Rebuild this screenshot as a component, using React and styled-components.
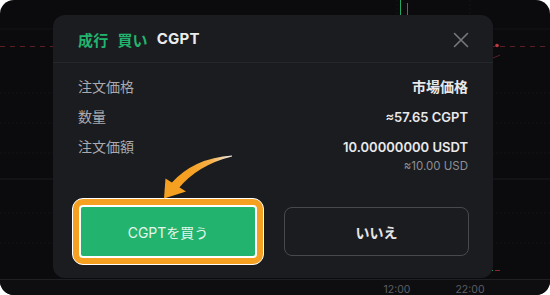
import React from "react";
import styled, { createGlobalStyle } from "styled-components";

const GlobalStyle = createGlobalStyle`
  html, body { margin: 0; padding: 0; background: #ffffff; }
  * { box-sizing: border-box; }
`;

const FONT = `Inter, "Noto Sans CJK JP", "Noto Sans", sans-serif`;

const Frame = styled.div`
  position: relative;
  width: 550px;
  height: 295px;
  border-radius: 14px;
  background: #0b0b0e;
  overflow: hidden;
  display: grid;
  font-family: ${FONT};
`;

const ChartLayer = styled.svg`
  grid-area: 1 / 1;
  width: 550px;
  height: 295px;
  display: block;
`;

const ModalSlot = styled.div`
  grid-area: 1 / 1;
  padding: 15px 0 0 53px;
  align-self: start;
`;

const Modal = styled.div`
  width: 440px;
  height: 263px;
  background: #1b1c20;
  border-radius: 12px;
  display: flex;
  flex-direction: column;
`;

const Header = styled.div`
  height: 48px;
  display: flex;
  align-items: center;
  justify-content: space-between;
  padding: 2px 24px 0 25px;
  border-bottom: 1px solid #26272b;
`;

const Title = styled.div`
  font-size: 15px;
  font-weight: 700;
  color: #ececee;
  display: flex;
  gap: 9px;
  letter-spacing: 0.2px;
`;

const Accent = styled.span`
  color: ${(p) => p.$color || "#22b46e"};
`;

const CloseButton = styled.button`
  border: 0;
  background: transparent;
  padding: 0;
  width: 16px;
  height: 16px;
  display: flex;
  align-items: center;
  justify-content: center;
  cursor: pointer;
`;

const Body = styled.div`
  padding: 13px 25px 0;
  display: flex;
  flex-direction: column;
  gap: 8px;
`;

const Row = styled.div`
  display: flex;
  justify-content: space-between;
  align-items: flex-start;
`;

const Label = styled.div`
  font-size: 14px;
  line-height: 22px;
  color: #a9aaaf;
`;

const ValueCol = styled.div`
  display: flex;
  flex-direction: column;
  align-items: flex-end;
`;

const Value = styled.div`
  font-size: ${(p) => (p.$latin ? "13px" : "14px")};
  line-height: 22px;
  font-weight: 600;
  color: #e9e9eb;
`;

const SubValue = styled.div`
  font-size: 11.5px;
  line-height: 16px;
  color: #8e8f94;
`;

const Footer = styled.div`
  margin-top: 24px;
  padding: 0 24px 0 19px;
  display: flex;
  align-items: center;
  gap: 20px;
`;

const Highlight = styled.div`
  width: 192px;
  height: 67px;
  border: 1px solid #ffffff;
  border-radius: 11px;
  background: #f5a021;
  padding: 6px;
`;

const BuyButton = styled.button`
  width: 100%;
  height: 100%;
  border: 2px solid #ffffff;
  border-radius: 4px;
  background: #22b46e;
  color: #e3f6ec;
  font-family: ${FONT};
  font-size: 14px;
  font-weight: 400;
  cursor: pointer;
`;

const NoButton = styled.button`
  width: 185px;
  height: 49px;
  border: 1px solid #48494e;
  border-radius: 8px;
  background: transparent;
  color: #e6e6e8;
  font-family: ${FONT};
  font-size: 14px;
  font-weight: 600;
  cursor: pointer;
`;

const ArrowOverlay = styled.svg`
  position: absolute;
  left: 0;
  top: 0;
  width: 550px;
  height: 295px;
  pointer-events: none;
`;

function Chart() {
  return (
    <ChartLayer viewBox="0 0 550 295">
      {[93, 123, 153, 213, 243].map((y) => (
        <line key={y} x1="0" y1={y} x2="550" y2={y} stroke="#141519" strokeWidth="1" strokeDasharray="2 2" />
      ))}
      <line x1="397" y1="0" x2="397" y2="280" stroke="#131417" strokeWidth="1" strokeDasharray="2 2" />
      <line x1="470" y1="0" x2="470" y2="280" stroke="#131417" strokeWidth="1" strokeDasharray="2 2" />
      <line x1="0" y1="29" x2="550" y2="29" stroke="#141519" strokeWidth="1" />
      <line x1="0" y1="179" x2="550" y2="179" stroke="#1c1d21" strokeWidth="1" />
      <line x1="0" y1="46.5" x2="550" y2="46.5" stroke="#5c1f24" strokeWidth="1" strokeDasharray="5 5" />
      <circle cx="497" cy="45.5" r="1.8" fill="#c03a3f" />
      <line x1="400.5" y1="0" x2="400.5" y2="15" stroke="#22a866" strokeWidth="1" />
      <line x1="407.5" y1="3" x2="407.5" y2="15" stroke="#c23a40" strokeWidth="1" />
      <line x1="493" y1="58" x2="500" y2="55" stroke="#5c1f24" strokeWidth="1" />
      <line x1="492" y1="270.5" x2="493" y2="270.5" stroke="#22a866" strokeWidth="1" />
      <line x1="495" y1="270.5" x2="500" y2="270.5" stroke="#8a2a2f" strokeWidth="1" />
      <rect x="0" y="279" width="550" height="16" fill="#0e0e11" />
      <line x1="0" y1="279.5" x2="550" y2="279.5" stroke="#1f2024" strokeWidth="1" />
      <text x="397" y="292.5" fontSize="10.5" fill="#5d5e63" textAnchor="middle" fontFamily="Inter, sans-serif">12:00</text>
      <text x="470" y="292.5" fontSize="10.5" fill="#5d5e63" textAnchor="middle" fontFamily="Inter, sans-serif">22:00</text>
    </ChartLayer>
  );
}

function Arrow() {
  return (
    <ArrowOverlay viewBox="0 0 550 295">
      <defs>
        <linearGradient id="arrowGrad" x1="232" y1="156" x2="190" y2="175" gradientUnits="userSpaceOnUse">
          <stop offset="0" stopColor="#ffffff" stopOpacity="0.9" />
          <stop offset="0.45" stopColor="#f7b24a" />
          <stop offset="1" stopColor="#f5a021" />
        </linearGradient>
      </defs>
      <path d="M232 155.6 Q194 158 171 183.5 L178.5 188.5 Q198 165 232 156.6 Z" fill="url(#arrowGrad)" />
      <path d="M164 198.5 L165.5 178.5 L186 191.5 Z" fill="#f5a021" />
    </ArrowOverlay>
  );
}

export default function App() {
  return (
    <>
      <GlobalStyle />
      <Frame>
        <Chart />
        <ModalSlot>
          <Modal>
            <Header>
              <Title>
                <Accent>成行</Accent>
                <Accent>買い</Accent>
                <span>CGPT</span>
              </Title>
              <CloseButton aria-label="close">
                <svg width="16" height="16" viewBox="0 0 16 16">
                  <path d="M1.5 1.5 L14.5 14.5 M14.5 1.5 L1.5 14.5" stroke="#77787d" strokeWidth="1.6" strokeLinecap="round" />
                </svg>
              </CloseButton>
            </Header>
            <Body>
              <Row>
                <Label>注文価格</Label>
                <ValueCol>
                  <Value>市場価格</Value>
                </ValueCol>
              </Row>
              <Row>
                <Label>数量</Label>
                <ValueCol>
                  <Value $latin>≈57.65 CGPT</Value>
                </ValueCol>
              </Row>
              <Row>
                <Label>注文価額</Label>
                <ValueCol>
                  <Value $latin>10.00000000 USDT</Value>
                  <SubValue>≈10.00 USD</SubValue>
                </ValueCol>
              </Row>
            </Body>
            <Footer>
              <Highlight>
                <BuyButton>CGPTを買う</BuyButton>
              </Highlight>
              <NoButton>いいえ</NoButton>
            </Footer>
          </Modal>
        </ModalSlot>
        <Arrow />
      </Frame>
    </>
  );
}
